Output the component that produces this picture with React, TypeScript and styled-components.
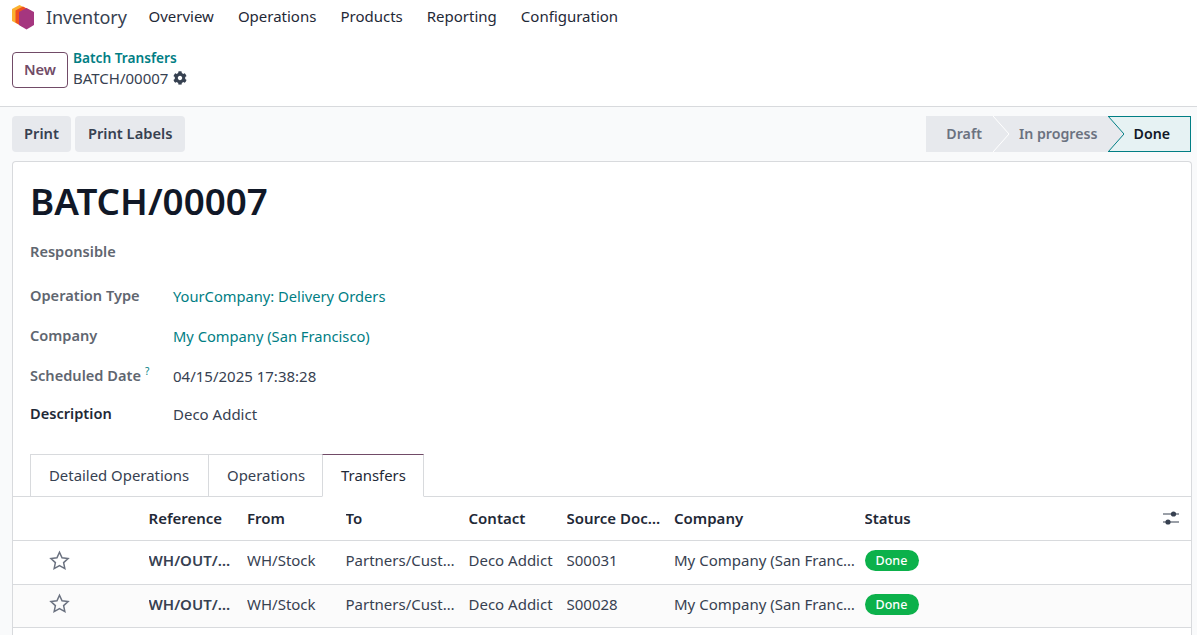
import React from "react";
import styled, { createGlobalStyle } from "styled-components";
import { FaCog } from "react-icons/fa";

const GlobalStyle = createGlobalStyle`
  html, body {
    margin: 0;
    height: 100%;
    overflow: hidden;
    background: #fff;
    font-family: "Noto Sans", "Open Sans", sans-serif;
    font-size: 15px;
    color: #374151;
  }
`;

const Page = styled.div`
  width: 1197px;
  height: 635px;
  overflow: hidden;
  display: flex;
  flex-direction: column;
`;

const Navbar = styled.nav`
  height: 34px;
  display: flex;
  align-items: center;
  padding-left: 12px;
`;

const BrandLogo = styled.svg`
  width: 22px;
  height: 25px;
  margin-right: 12px;
`;

const Brand = styled.span`
  font-size: 18px;
  color: #374151;
  margin-right: 9.7px;
  margin-top: -1px;
  letter-spacing: -0.1px;
`;

const NavItem = styled.a`
  color: #1f2937;
  font-size: 15px;
  margin-top: -2px;
  padding: 0 12px;
`;

const ControlPanel = styled.div`
  height: 73px;
  box-sizing: border-box;
  padding: 18px 12px 0;
  display: flex;
  gap: 5px;
  border-bottom: 1px solid #d8dadd;
`;

const NewButton = styled.button`
  width: 56px;
  height: 36px;
  background: #fff;
  border: 1px solid #714b67;
  border-radius: 4px;
  color: #714b67;
  font: 600 14.7px "Noto Sans", sans-serif;
  padding: 0 0 2px;
`;

const Crumbs = styled.div`
  display: flex;
  flex-direction: column;
  margin-top: -4px;
  line-height: 20px;
`;

const CrumbLink = styled.a`
  color: #017e84;
  font-weight: 600;
  font-size: 13.7px;
`;

const CrumbCurrent = styled.div`
  display: flex;
  align-items: center;
  gap: 5px;
  color: #374151;
  font-size: 15px;

  svg {
    width: 14px;
    height: 14px;
  }
`;

const Content = styled.div`
  flex: 1;
  background: #f9fafb;
  padding: 9px 5px 0 12px;
  display: flex;
  flex-direction: column;
  gap: 9px;
  min-height: 0;
`;

const ActionBar = styled.div`
  display: flex;
  justify-content: space-between;
  padding-right: 1px;
`;

const ActionGroup = styled.div`
  display: flex;
  gap: 4px;
`;

const ActionButton = styled.button`
  height: 36px;
  padding: 0 12px 2px;
  background: #e7e9ed;
  border: none;
  border-radius: 4px;
  color: #374151;
  font: 600 14.7px "Noto Sans", sans-serif;

  & + & {
    padding: 0 13px 2px;
  }
`;

const Statusbar = styled.div`
  display: flex;
  height: 36px;
`;

const Step = styled.div<{ $active?: boolean; $first?: boolean }>`
  position: relative;
  display: flex;
  align-items: center;
  box-sizing: border-box;
  height: 36px;
  padding-bottom: 1px;
  background: ${(p) => (p.$active ? "#e6f2f3" : "#e7e9ed")};
  color: ${(p) => (p.$active ? "#111827" : "#6b7280")};
  font-weight: 600;
  font-size: 14.2px;
  padding-left: ${(p) => (p.$first ? "20px" : "26px")};
  padding-right: ${(p) => (p.$first ? "11px" : p.$active ? "20px" : "10px")};
  ${(p) => p.$active && "border: 1px solid #017e84; border-left: none;"}
`;

const Chevron = styled.svg`
  position: absolute;
  top: 0;
  right: -16px;
  width: 16px;
  height: 36px;
  z-index: 1;
`;

const Sheet = styled.div`
  flex: 1;
  background: #fff;
  border: 1px solid #d8dadd;
  border-radius: 4px 4px 0 0;
  border-bottom: none;
  display: flex;
  flex-direction: column;
`;

const Title = styled.h1`
  margin: 0;
  padding: 15px 17px 0;
  height: 66px;
  box-sizing: border-box;
  font-size: 36.8px;
  font-weight: 600;
  line-height: 48px;
  color: #111827;
`;

const Fields = styled.div`
  padding: 3px 17px 0;
  height: 226px;
  box-sizing: border-box;
  display: flex;
  flex-direction: column;
`;

const FieldRow = styled.div<{ $height: number }>`
  display: grid;
  grid-template-columns: 143px 1fr;
  align-items: center;
  height: ${(p) => p.$height}px;
`;

const Label = styled.label<{ $dark?: boolean }>`
  color: ${(p) => (p.$dark ? "#1f2937" : "#5f6670")};
  font-weight: 600;
  font-size: 14.6px;

  sup {
    color: #017e84;
    font-size: 10px;
    font-weight: 400;
    margin-left: 4px;
    line-height: 0;
  }
`;

const ValueLink = styled.a`
  color: #017e84;
  font-size: 14.7px;
  padding-top: 2px;
`;

const Value = styled.span`
  color: #374151;
  font-size: 15px;
  padding-top: 2px;
`;

const Tabs = styled.div`
  display: flex;
  padding-left: 17px;
  height: 43px;
  box-sizing: border-box;
  border-bottom: 1px solid #d8dadd;
`;

const Tab = styled.div<{ $active?: boolean }>`
  display: flex;
  align-items: center;
  height: 43px;
  box-sizing: border-box;
  padding: 0 17px 2px 18px;
  font-size: 14.9px;
  color: ${(p) => (p.$active ? "#1f2937" : "#374151")};
  background: #fff;
  border: 1px solid #d8dadd;
  margin-right: -1px;
  border-top-color: ${(p) => (p.$active ? "#714b67" : "#d8dadd")};
  border-bottom-color: ${(p) => (p.$active ? "#fff" : "#d8dadd")};
  position: relative;
  z-index: ${(p) => (p.$active ? 1 : 0)};

  &:first-child {
    padding-right: 19px;
  }
`;

const Grid = "grid-template-columns: 135.5px 98.5px 98.5px 123px 98px 107.5px 190.5px 1fr 28px;";

const HeaderRow = styled.div`
  display: grid;
  ${Grid}
  height: 44px;
  box-sizing: border-box;
  padding-bottom: 2px;
  align-items: center;
  border-bottom: 1px solid #d8dadd;
  font-size: 15px;
  color: #1f2937;
`;

const DataRow = styled.div<{ $even?: boolean }>`
  display: grid;
  ${Grid}
  height: 43.5px;
  box-sizing: border-box;
  padding-bottom: 4px;
  align-items: center;
  border-bottom: 1px solid #d8dadd;
  background: ${(p) => (p.$even ? "#fbfbfb" : "#fff")};
  font-size: 15px;
  color: #374151;
`;

const Cell = styled.div<{ $bold?: boolean }>`
  white-space: nowrap;
  overflow: hidden;
  text-overflow: ellipsis;
  padding-right: 8px;
  font-weight: ${(p) => (p.$bold ? 600 : 400)};
`;

const ReferenceCell = styled(Cell)`
  padding-right: 14px;
`;

const StarCell = styled.div`
  padding-left: 36px;
  display: flex;
  color: #6b7280;

  svg {
    width: 21px;
    height: 21px;
  }
`;

const Badge = styled.span`
  display: inline-flex;
  align-items: center;
  justify-content: center;
  width: 54px;
  height: 21px;
  border-radius: 11px;
  background: #0cb14b;
  color: #fff;
  font-size: 12.5px;
  font-weight: 500;
`;

const Logo = () => (
  <BrandLogo viewBox="0 0 22 25">
    <polygon points="7.5,0 15,4 15,16 7.5,20 0,16 0,4" fill="#fbb130" />
    <polygon points="11,1.5 18.5,5.5 18.5,17.5 11,22 3.5,17.5 3.5,5.5" fill="#f0501f" />
    <polygon points="14.5,3 22,7 22,20 14.5,24.5 7,20 7,7" fill="#a5367f" />
  </BrandLogo>
);

const Star = () => (
  <svg viewBox="0 0 24 24" fill="none" stroke="currentColor" strokeWidth="1.7" strokeLinejoin="miter">
    <polygon points="12,2.6 14.9,8.9 21.8,9.7 16.7,14.4 18.1,21.2 12,17.8 5.9,21.2 7.3,14.4 2.2,9.7 9.1,8.9" />
  </svg>
);

const Sliders = () => (
  <svg width="16" height="14" viewBox="0 0 16 14" fill="#374151">
    <rect x="0" y="2.5" width="16" height="1" />
    <circle cx="10.5" cy="3" r="2.6" />
    <rect x="0" y="10.5" width="16" height="1" />
    <circle cx="5" cy="11" r="2.6" />
  </svg>
);

const rows = ["S00031", "S00028"];

export default function App() {
  return (
    <>
      <GlobalStyle />
      <Page>
        <Navbar>
          <Logo />
          <Brand>Inventory</Brand>
          <NavItem>Overview</NavItem>
          <NavItem>Operations</NavItem>
          <NavItem>Products</NavItem>
          <NavItem>Reporting</NavItem>
          <NavItem>Configuration</NavItem>
        </Navbar>
        <ControlPanel>
          <NewButton>New</NewButton>
          <Crumbs>
            <CrumbLink>Batch Transfers</CrumbLink>
            <CrumbCurrent>
              BATCH/00007 <FaCog />
            </CrumbCurrent>
          </Crumbs>
        </ControlPanel>
        <Content>
          <ActionBar>
            <ActionGroup>
              <ActionButton>Print</ActionButton>
              <ActionButton>Print Labels</ActionButton>
            </ActionGroup>
            <Statusbar>
              <Step $first>
                Draft
                <Chevron viewBox="0 0 16 36">
                  <polygon points="0,0 16,18 0,36" fill="#e7e9ed" />
                  <polyline points="0,0 16,18 0,36" fill="none" stroke="#fff" strokeWidth="1" />
                </Chevron>
              </Step>
              <Step>
                In progress
                <Chevron viewBox="0 0 16 36">
                  <polygon points="0,0 16,18 0,36" fill="#e7e9ed" />
                  <polyline points="0,0 16,18 0,36" fill="none" stroke="#017e84" strokeWidth="1" />
                </Chevron>
              </Step>
              <Step $active>Done</Step>
            </Statusbar>
          </ActionBar>
          <Sheet>
            <Title>BATCH/00007</Title>
            <Fields>
              <FieldRow $height={40}>
                <Label>Responsible</Label>
              </FieldRow>
              <FieldRow $height={48}>
                <Label>Operation Type</Label>
                <ValueLink>YourCompany: Delivery Orders</ValueLink>
              </FieldRow>
              <FieldRow $height={32}>
                <Label>Company</Label>
                <ValueLink>My Company (San Francisco)</ValueLink>
              </FieldRow>
              <FieldRow $height={48}>
                <Label>
                  Scheduled Date<sup>?</sup>
                </Label>
                <Value>04/15/2025 17:38:28</Value>
              </FieldRow>
              <FieldRow $height={28}>
                <Label $dark>Description</Label>
                <Value>Deco Addict</Value>
              </FieldRow>
            </Fields>
            <Tabs>
              <Tab>Detailed Operations</Tab>
              <Tab>Operations</Tab>
              <Tab $active>Transfers</Tab>
            </Tabs>
            <HeaderRow>
              <span />
              <Cell $bold>Reference</Cell>
              <Cell $bold>From</Cell>
              <Cell $bold>To</Cell>
              <Cell $bold>Contact</Cell>
              <Cell $bold>Source Document</Cell>
              <Cell $bold>Company</Cell>
              <Cell $bold>Status</Cell>
              <Sliders />
            </HeaderRow>
            {rows.map((doc, i) => (
              <DataRow key={doc} $even={i % 2 === 1}>
                <StarCell>
                  <Star />
                </StarCell>
                <ReferenceCell $bold>WH/OUT/00012</ReferenceCell>
                <Cell>WH/Stock</Cell>
                <Cell>Partners/Customers</Cell>
                <Cell>Deco Addict</Cell>
                <Cell>{doc}</Cell>
                <Cell>My Company (San Francisco)</Cell>
                <Cell>
                  <Badge>Done</Badge>
                </Cell>
                <span />
              </DataRow>
            ))}
          </Sheet>
        </Content>
      </Page>
    </>
  );
}
